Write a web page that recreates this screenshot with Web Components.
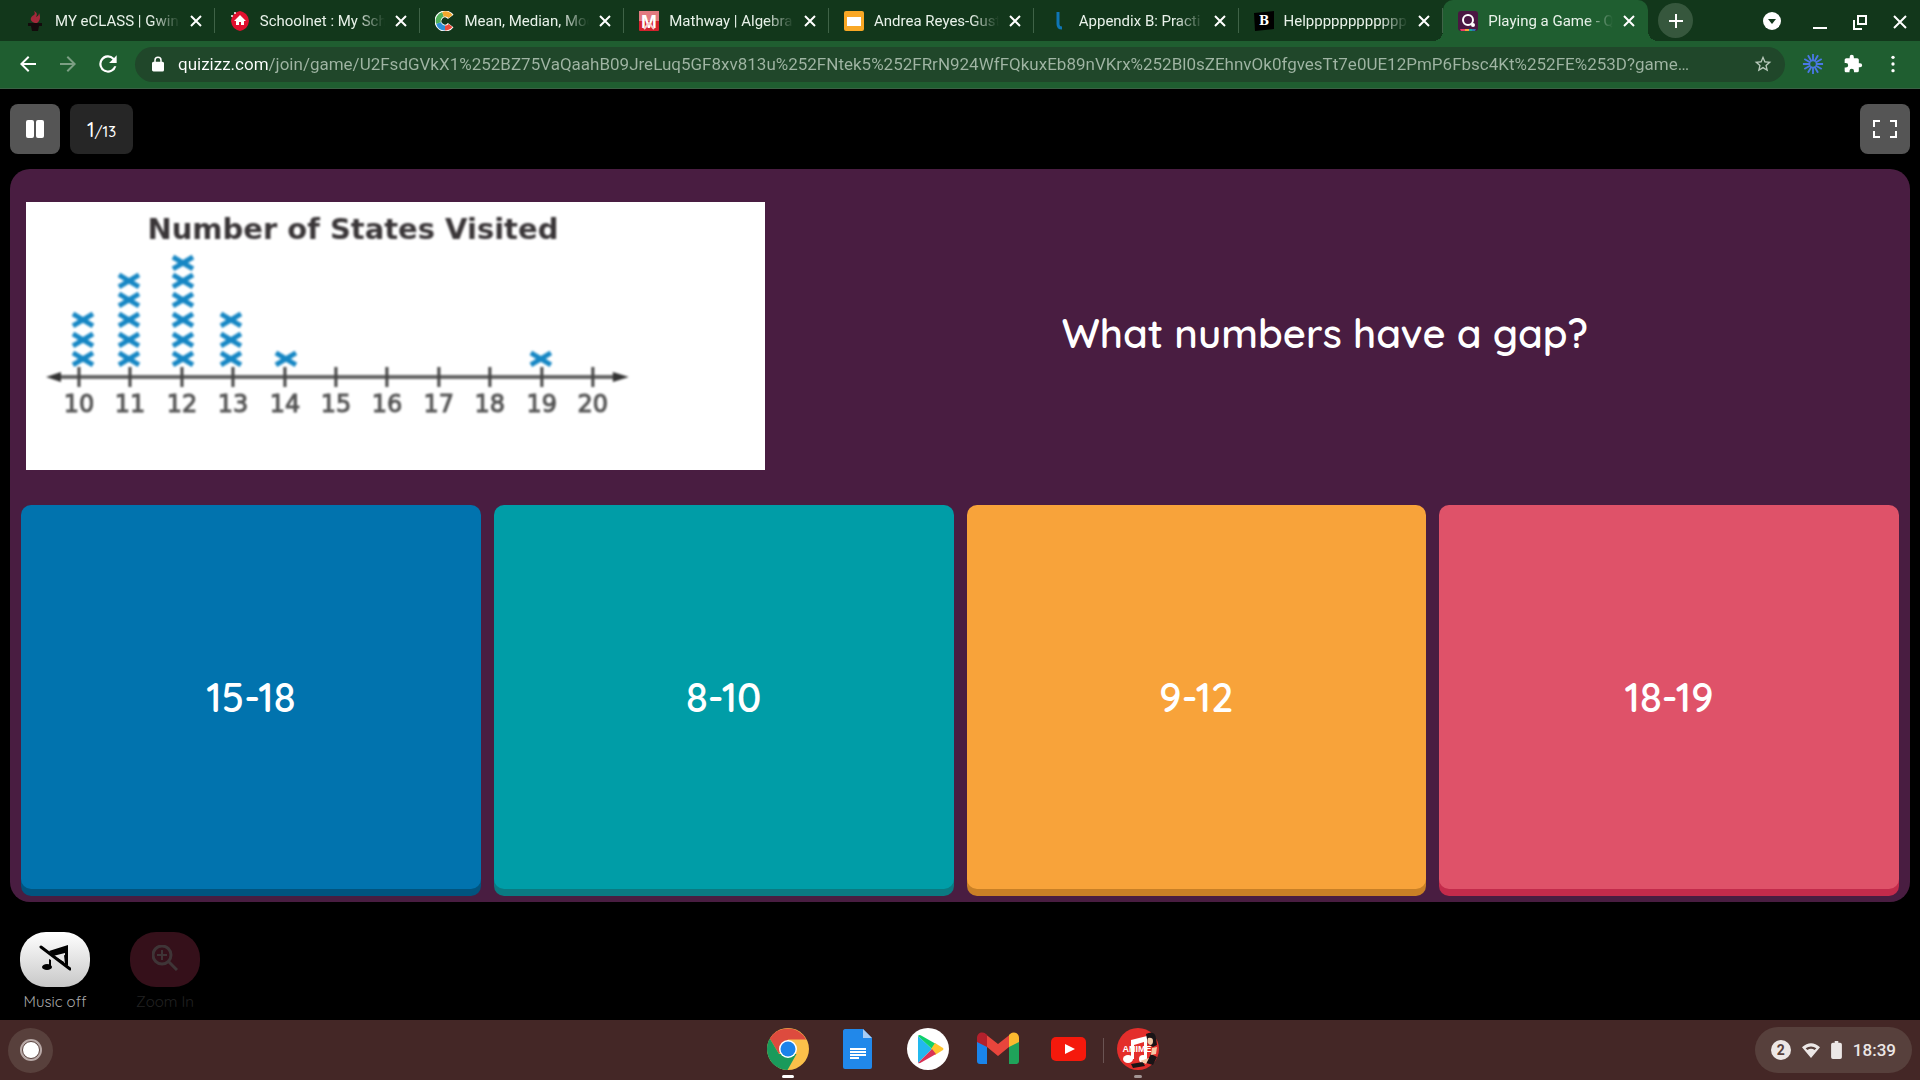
<!DOCTYPE html>
<html lang="en">
<head>
<meta charset="utf-8">
<meta name="viewport" content="width=device-width, initial-scale=1">
<title>Playing a Game - Quizizz</title>
<style>
  html, body {
    height: 100%;
    margin: 0;
    background: #000;
  }

  body {
    display: flex;
    flex-direction: column;
    font-family: Roboto, "Liberation Sans", sans-serif;
    color: #fff;
    --strip: #12371b;
    --toolbar: #1f5e30;
    --field: #20472a;
    --game-font: Quicksand, Lato, sans-serif;
  }
</style>
</head>
<body>
  <tab-strip>
    <browser-tab icon="torch">MY eCLASS | Gwin</browser-tab>
    <browser-tab icon="schoolnet">Schoolnet : My Sch</browser-tab>
    <browser-tab icon="calculator">Mean, Median, Mod</browser-tab>
    <browser-tab icon="mathway">Mathway | Algebra</browser-tab>
    <browser-tab icon="slides">Andrea Reyes-Gust</browser-tab>
    <browser-tab icon="lumen">Appendix B: Practi</browser-tab>
    <browser-tab icon="brainly">Helppppppppppppp</browser-tab>
    <browser-tab icon="quizizz" active>Playing a Game - Q</browser-tab>
  </tab-strip>

  <browser-toolbar></browser-toolbar>

  <quiz-game>
    <quiz-header slot="header" current="1" total="13"></quiz-header>
    <dot-plot slot="media"></dot-plot>
    <span slot="question">What numbers have a gap?</span>
    <answer-option slot="answers" style="--face:#0173ae;--edge:#01547f">15-18</answer-option>
    <answer-option slot="answers" style="--face:#009da7;--edge:#0a7a82">8-10</answer-option>
    <answer-option slot="answers" style="--face:#f8a33a;--edge:#c98026">9-12</answer-option>
    <answer-option slot="answers" style="--face:#df5269;--edge:#c32b4b">18-19</answer-option>
    <game-action slot="actions" icon="music-off">Music off</game-action>
    <game-action slot="actions" icon="zoom-in" disabled>Zoom In</game-action>
  </quiz-game>

  <system-shelf>
    <shelf-app icon="chrome" label="Chrome" state="active"></shelf-app>
    <shelf-app icon="docs" label="Docs"></shelf-app>
    <shelf-app icon="play" label="Play Store"></shelf-app>
    <shelf-app icon="gmail" label="Gmail"></shelf-app>
    <shelf-app icon="youtube" label="YouTube"></shelf-app>
    <shelf-app icon="anime" label="Anime Music" state="running" divided></shelf-app>
    <span slot="clock">18:39</span>
  </system-shelf>

<script>
const ICONS = {
  torch: `<svg viewBox="0 0 20 20"><path fill="#a3283a" d="M10 12C4 10 5 6 9 4c1-1 1-2 0-4 4 2 3 4 2 6 2-1 3-2 3-4 2 4 1 8-2 10z"/><path fill="#130b0c" d="M3 12h14v3h-3l-1 5H7l-1-5H3z"/></svg>`,
  schoolnet: `<svg viewBox="0 0 20 20"><path fill="#e1102f" d="M10 0l3 1 3 2 2 3 1 4-1 4-2 3-3 2-3 1-3-1-3-2-2-3-1-4 1-4 2-3 3-2z"/><path fill="#fff" d="M10 4l6 6h-2v4h-3v-3H9v3H6v-4H4z"/><circle cx="2" cy="5" r="1" fill="#fff"/><circle cx="5" cy="2" r="1" fill="#fff"/></svg>`,
  calculator: `<svg viewBox="0 0 20 20" fill="none" stroke-width="5"><circle cx="10" cy="10" r="7" stroke="#fff" stroke-width="7" stroke-dasharray="35 9" transform="rotate(36 10 10)"/><path stroke="#ef4a3b" d="M15.500 14.500A7 7 0 0 1 10 17"/><path stroke="#2f8fd8" d="M10 17A7 7 0 0 1 3.500 12"/><path stroke="#4fb05a" d="M3.500 12A7 7 0 0 1 8 3.300"/><path stroke="#f3a72d" d="M8 3.300A7 7 0 0 1 15.500 5.500"/></svg>`,
  mathway: `<svg viewBox="0 0 20 20"><rect width="20" height="20" rx="1" fill="#d3222e"/><rect width="20" height="10" fill="#e27a80"/><text x="10" y="17" text-anchor="middle" font-family="Liberation Sans" font-size="19" font-weight="bold" fill="#fff">M</text><path d="M5 18l5-6 5 6" fill="none" stroke="#f6c9cb" stroke-width="2"/></svg>`,
  slides: `<svg viewBox="0 0 20 20"><rect width="20" height="20" rx="2" fill="#f9a825"/><rect x="3" y="6" width="14" height="9" fill="#fff"/></svg>`,
  lumen: `<svg viewBox="0 0 20 20"><path d="M9 1v12q0 4 4 4" fill="none" stroke="#0f75b5" stroke-width="3"/></svg>`,
  brainly: `<svg viewBox="0 0 20 20"><path fill="#000" d="M0 2l20-2v18L1 20z"/><text x="10" y="14" text-anchor="middle" font-family="DejaVu Serif" font-size="12" font-weight="bold" fill="#fff">B</text></svg>`,
  quizizz: `<svg viewBox="0 0 20 20"><rect width="20" height="20" rx="3" fill="#4a1742"/><path d="M2 18h5v2H3z" fill="#ef3c69"/><path d="M7 18h4v2H7z" fill="#f9a33a"/><path d="M11 18h3v2h-3z" fill="#18a99d"/><path d="M14 18h4l-1 2h-3z" fill="#2d70ae"/><circle cx="10" cy="9" r="5" fill="none" stroke="#fff" stroke-width="2"/><circle cx="15" cy="14" r="2" fill="#fff"/></svg>`,
  close: `<svg viewBox="0 0 20 20"><path d="M5 5l10 10M15 5L5 15" stroke="currentColor" stroke-width="2"/></svg>`,
  plus: `<svg viewBox="0 0 20 20"><path d="M10 3v14M3 10h14" stroke="currentColor" stroke-width="2"/></svg>`,
  search: `<svg viewBox="0 0 20 20"><circle cx="10" cy="10" r="9" fill="currentColor"/><path fill="#12371b" d="M6 8h8l-4 5z"/></svg>`,
  minimize: `<svg viewBox="0 0 20 20"><path d="M3 17h14" stroke="currentColor" stroke-width="2"/></svg>`,
  restore: `<svg viewBox="0 0 20 20" fill="none" stroke="currentColor" stroke-width="2"><path d="M8 5h8v8H8z"/><path d="M4 9v9h8"/></svg>`,
  exit: `<svg viewBox="0 0 20 20"><path d="M4 5l12 12M16 5L4 17" stroke="currentColor" stroke-width="2"/></svg>`,
  back: `<svg viewBox="0 0 24 24"><path fill="currentColor" d="M20 11H7.800l5.600-5.600L12 4l-8 8 8 8 1.400-1.400L7.800 13H20z"/></svg>`,
  forward: `<svg viewBox="0 0 24 24"><path fill="currentColor" d="M4 11h12.200l-5.600-5.600L12 4l8 8-8 8-1.400-1.400 5.600-5.600H4z"/></svg>`,
  reload: `<svg viewBox="0 0 24 24"><path fill="currentColor" d="M17.650 6.350A8 8 0 1 0 19.730 14h-2.080A6 6 0 1 1 12 6c1.660 0 3.140.69 4.220 1.780L13 11h7V4z"/></svg>`,
  lock: `<svg viewBox="0 0 24 24"><path fill="currentColor" d="M18 9h-1V7A5 5 0 0 0 7 7v2H6a2 2 0 0 0-2 2v9c0 1 1 2 2 2h12a2 2 0 0 0 2-2v-9a2 2 0 0 0-2-2zM9 7a3 3 0 0 1 6 0v2H9z"/></svg>`,
  star: `<svg viewBox="0 0 24 24"><path fill="currentColor" d="M22 9.240l-7.190-.62L12 2 9.190 8.630 2 9.240l5.460 4.730L5.820 21 12 17.270 18.180 21l-1.630-7.030zM12 15.400l-3.760 2.270 1-4.280-3.320-2.880 4.380-.38L12 6.100l1.710 4.040 4.380.38-3.320 2.880 1 4.280z"/></svg>`,
  burst: `<svg viewBox="0 0 24 24"><g stroke="#4a78e6" stroke-width="2"><path d="M12 1v22M1 12h22M6.500 2.500l11 19M2.500 6.500l19 11M17.500 2.500l-11 19M21.500 6.500l-19 11"/></g><circle cx="12" cy="12" r="3" fill="#1f5e30"/></svg>`,
  puzzle: `<svg viewBox="0 0 24 24"><path fill="currentColor" d="M20.500 11H19V7a2 2 0 0 0-2-2h-4V3.500a2.500 2.500 0 0 0-5 0V5H4a2 2 0 0 0-2 2v3.800h1.500a2.700 2.700 0 0 1 0 5.400H2V20c0 1.100.9 2 2 2h3.800v-1.500a2.700 2.700 0 0 1 5.400 0V22H17a2 2 0 0 0 2-2v-4h1.500a2.500 2.500 0 0 0 0-5z"/></svg>`,
  dots: `<svg viewBox="0 0 24 24" fill="currentColor"><circle cx="12" cy="4" r="2"/><circle cx="12" cy="12" r="2"/><circle cx="12" cy="20" r="2"/></svg>`,
  pause: `<svg viewBox="0 0 20 20" fill="#fff"><rect x="1" y="1" width="8" height="18" rx="2"/><rect x="11" y="1" width="8" height="18" rx="2"/></svg>`,
  fullscreen: `<svg viewBox="0 0 26 20"><path fill="none" stroke="#fff" stroke-width="2" d="M8 2H2v6M18 2h6v6M2 12v6h6M24 12v6h-6"/></svg>`,
  "music-off": `<svg viewBox="0 0 32 26"><path fill="#000" d="M10 6L29 0v21l-3-2V8l-12 3z"/><ellipse cx="8" cy="22" rx="5" ry="3"/><path d="M10 14l2 1v7h-2zM17 13l9-3-1 9z"/><path fill="#e6e6e6" d="M17 12l8-3v8z"/><path d="M2 2l29 22" stroke="#000" stroke-width="3" stroke-linecap="round"/></svg>`,
  "zoom-in": `<svg viewBox="0 0 26 26" fill="none" stroke="#3f3537"><circle cx="10" cy="10" r="9" stroke-width="3"/><path d="M10 5v10M5 10h10" stroke-width="2"/><path d="M16 16l9 9" stroke-width="3"/></svg>`,
  chrome: `<svg viewBox="0 0 42 42"><circle cx="21" cy="21" r="21" fill="#fbc04a"/><path fill="#dd4b3e" d="M2.800 10.500A21 21 0 0 1 39.200 11.500H21L12 26z"/><path fill="#1a9a5b" d="M2.800 10.500A21 21 0 0 0 20.500 42l9-16H12z"/><circle cx="21" cy="21" r="9" fill="#fff"/><circle cx="21" cy="21" r="7.500" fill="#1a82ea"/></svg>`,
  docs: `<svg viewBox="0 0 42 42"><path fill="#2188ea" d="M8 1h18l9 9v29a2 2 0 0 1-2 2H8a2 2 0 0 1-2-2V3c0-1 1-2 2-2z"/><path fill="#a8cdf5" d="M26 1l9 9h-9z"/><path stroke="#fff" stroke-width="2" d="M13 21h16M13 24h16M13 27h16M13 30h9"/></svg>`,
  play: `<svg viewBox="0 0 42 42"><circle cx="21" cy="21" r="21" fill="#fff"/><path fill="#22b8ee" d="M11 8v27l14-14z"/><path fill="#0fd06b" d="M11 8q1-2 4 0l14 8-4 5z"/><path fill="#ffc42e" d="M28 15l8 5q1 1 0 2l-8 5-4-6z"/><path fill="#d93255" d="M11 35l14-14 4 5-14 8q-3 2-4 1z"/></svg>`,
  gmail: `<svg viewBox="0 0 42 42"><path fill="#1a84ea" d="M0 12h10v24H3a3 3 0 0 1-3-3z"/><path fill="#1fa35a" d="M32 12h10v21a3 3 0 0 1-3 3h-7z"/><path fill="#e8453c" d="M7 5l14 11L35 5l-3 14-11 9-11-9z"/><path fill="#b3202c" d="M0 14v-4C0 5 5 3 9 6l1 1v12l-10-5z"/><path fill="#fbb92f" d="M42 14v-4c0-5-5-7-9-4l-1 1v12l10-5z"/></svg>`,
  youtube: `<svg viewBox="0 0 42 42"><rect x="4" y="9" width="35" height="24" rx="5" fill="#f5190c"/><path fill="#fff" d="M18 16l10 5-10 5z"/></svg>`,
  anime: `<svg viewBox="0 0 42 42"><circle cx="21" cy="21" r="21" fill="#e42e2b"/><path fill="#fff" d="M14 12l16-4v22h-3V14l-10 3v14h-3z"/><ellipse cx="11" cy="31" rx="5" ry="4" fill="#fff"/><ellipse cx="26" cy="31" rx="4" ry="4" fill="#fff"/><path fill="#191416" d="M29 6q9-4 10 4l1 7-4 2-5-3zM34 26l6 3-4 8-7-2zM14 36l12-2 2 4-12 2z"/><path fill="#f5c9a6" d="M31 10q5-1 5 3t-3 4q-4-2-2-7zM35 20l5-1-1 7-5 1zM23 33l9-3-3 6z"/><text x="20" y="24" text-anchor="middle" font-family="Liberation Sans" font-size="9" font-weight="bold" fill="#fff">ANIME</text></svg>`,
  wifi: `<svg viewBox="0 0 20 20"><path fill="currentColor" fill-rule="evenodd" d="M0 7q10-9 20 0L10 19zM4 8l2 2q4-3 8 0l2-2q-6-4-12 0z"/></svg>`,
  battery: `<svg viewBox="0 0 12 20"><path fill="currentColor" d="M4 0h4v2h2a2 2 0 0 1 2 2v14a2 2 0 0 1-2 2H2a2 2 0 0 1-2-2V4a2 2 0 0 1 2-2h2z"/></svg>`
};

function icon(name, width = 20, height = width) {
  return ICONS[name].replace("<svg", `<svg width="${width}" height="${height}" aria-hidden="true"`);
}

// shared reset for every shadow root
const BASE = `
  :host, * { box-sizing: border-box; }
  svg { display: block; flex: none; }
  button {
    display: flex;
    align-items: center;
    justify-content: center;
    margin: 0;
    padding: 0;
    border: 0;
    background: none;
    color: inherit;
    font: inherit;
    cursor: pointer;
  }
`;

class BaseElement extends HTMLElement {
  constructor() {
    super();
    this.attachShadow({ mode: "open" });
  }

  connectedCallback() {
    this.shadowRoot.innerHTML = `<style>${BASE}${this.styles()}</style>${this.render()}`;
  }
}

class TabStrip extends BaseElement {
  styles() {
    return `
      :host {
        display: flex;
        align-items: stretch;
        height: 41px;
        flex: none;
        padding-left: 10px;
        background: var(--strip);
      }
      nav { display: flex; flex: 1; min-width: 0; }
      .right { display: flex; align-items: center; width: 272px; }
      .new {
        width: 35px;
        height: 35px;
        margin: 0 auto 0 10px;
        border-radius: 50%;
        background: #36573d;
      }
      .window { width: 40px; height: 40px; }
      .search { margin-right: 8px; }
    `;
  }

  render() {
    return `
      <nav aria-label="Tabs"><slot></slot></nav>
      <div class="right">
        <button class="new" aria-label="New tab">${icon("plus")}</button>
        <button class="window search" aria-label="Search tabs">${icon("search")}</button>
        <button class="window" aria-label="Minimize">${icon("minimize")}</button>
        <button class="window" aria-label="Restore">${icon("restore")}</button>
        <button class="window" aria-label="Close window">${icon("exit")}</button>
      </div>
    `;
  }
}

class BrowserTab extends BaseElement {
  styles() {
    return `
      :host {
        display: flex;
        position: relative;
        align-items: center;
        flex: 1;
        min-width: 0;
        padding: 0 6px 0 15px;
        font-size: 15px;
        color: #e9f2ea;
      }
      :host::after {
        content: "";
        position: absolute;
        right: 0;
        top: 8px;
        width: 1px;
        height: 25px;
        background: #3f6347;
      }
      :host([active]) {
        background: var(--toolbar);
        border-radius: 10px 10px 0 0;
      }
      :host([active])::before, :host([active])::after {
        content: "";
        position: absolute;
        top: auto;
        bottom: 0;
        width: 10px;
        height: 10px;
      }
      :host([active])::before {
        right: 100%;
        background: radial-gradient(circle at 0 0, transparent 10px, var(--toolbar) 10px);
      }
      :host([active])::after {
        left: 100%;
        background: radial-gradient(circle at 100% 0, transparent 10px, var(--toolbar) 10px);
      }
      a {
        display: flex;
        align-items: center;
        flex: 1;
        min-width: 0;
        gap: 10px;
        color: inherit;
        text-decoration: none;
      }
      .title {
        flex: 1;
        overflow: hidden;
        white-space: nowrap;
        -webkit-mask-image: linear-gradient(to left, transparent, #000 28px);
        mask-image: linear-gradient(to left, transparent, #000 28px);
      }
      button { width: 26px; height: 26px; margin-left: 3px; color: #fff; }
    `;
  }

  render() {
    return `
      <a href="#">${icon(this.getAttribute("icon"))}<span class="title"><slot></slot></span></a>
      <button aria-label="Close tab">${icon("close")}</button>
    `;
  }
}

class BrowserToolbar extends BaseElement {
  styles() {
    return `
      :host {
        display: flex;
        align-items: center;
        height: 48px;
        flex: none;
        padding: 0 7px 1px 8px;
        background: var(--toolbar);
        border-bottom: 1px solid #3a6044;
      }
      button { width: 40px; height: 40px; }
      .dim { color: #7c9f84; }
      .field {
        display: flex;
        align-items: center;
        flex: 1;
        min-width: 0;
        height: 35px;
        margin: 0 8px 0 7px;
        padding: 0 2px 0 14px;
        border-radius: 18px;
        background: var(--field);
      }
      .star { color: #b8c9bb; }
      input {
        flex: 1;
        min-width: 0;
        height: 30px;
        margin-left: 11px;
        padding: 0;
        border: 0;
        outline: 0;
        font: 17px Roboto, sans-serif;
        text-overflow: ellipsis;
        color: transparent;
        /* the host name is brighter than the path */
        background: linear-gradient(to right, #fff 90px, #a0b5a4 90px);
        -webkit-background-clip: text;
        background-clip: text;
      }
    `;
  }

  render() {
    return `
      <button aria-label="Back">${icon("back", 24)}</button>
      <button class="dim" aria-label="Forward">${icon("forward", 24)}</button>
      <button aria-label="Reload">${icon("reload", 26)}</button>
      <div class="field">
        ${icon("lock", 18)}
        <input type="text" aria-label="Address" spellcheck="false" value="quizizz.com/join/game/U2FsdGVkX1%252BZ75VaQaahB09JreLuq5GF8xv813u%252FNtek5%252FRrN924WfFQkuxEb89nVKrx%252Bl0sZEhnvOk0fgvesTt7e0UE12PmP6Fbsc4Kt%252FE%253D?game…">
        <button class="star" aria-label="Bookmark">${icon("star")}</button>
      </div>
      <button aria-label="Extension">${icon("burst", 22)}</button>
      <button aria-label="Extensions">${icon("puzzle")}</button>
      <button aria-label="Menu">${icon("dots")}</button>
    `;
  }
}

class QuizHeader extends BaseElement {
  styles() {
    return `
      :host {
        display: flex;
        align-items: center;
        gap: 10px;
        height: 80px;
        font-family: var(--game-font);
      }
      button {
        width: 50px;
        height: 50px;
        border-radius: 8px;
        background: #555;
      }
      .count {
        display: flex;
        align-items: baseline;
        justify-content: center;
        width: 63px;
        height: 50px;
        border-radius: 8px;
        background: #262626;
        font-size: 15px;
        line-height: 52px;
        font-weight: 500;
      }
      .count b { font-size: 20px; font-weight: 500; }
      .full { margin-left: auto; }
    `;
  }

  render() {
    return `
      <button aria-label="Pause">${icon("pause", 20)}</button>
      <div class="count"><b>${this.getAttribute("current")}</b>/${this.getAttribute("total")}</div>
      <button class="full" aria-label="Fullscreen">${icon("fullscreen", 26, 20)}</button>
    `;
  }
}

class QuizGame extends BaseElement {
  styles() {
    return `
      :host {
        display: flex;
        flex-direction: column;
        flex: 1;
        min-height: 0;
        padding: 0 10px;
        background: #000;
        font-family: var(--game-font);
      }
      main {
        display: grid;
        grid-template-rows: 336fr 397fr;
        flex: 1;
        min-height: 0;
        border-radius: 20px;
        background: #491d41;
      }
      .top {
        display: grid;
        grid-template-columns: 2fr 3fr;
        align-items: center;
        gap: 6px;
        padding: 0 31px 2px 16px;
      }
      h1 {
        margin: 0;
        padding-bottom: 6px;
        font-size: 40px;
        line-height: 52px;
        font-weight: 600;
        text-align: center;
      }
      .answers {
        display: grid;
        grid-template-columns: repeat(4, 1fr);
        gap: 13px;
        padding: 0 11px 13px;
      }
      footer {
        display: flex;
        gap: 40px;
        height: 118px;
        padding: 30px 10px 0;
      }
    `;
  }

  render() {
    return `
      <slot name="header"></slot>
      <main>
        <div class="top">
          <slot name="media"></slot>
          <h1><slot name="question"></slot></h1>
        </div>
        <div class="answers"><slot name="answers"></slot></div>
      </main>
      <footer><slot name="actions"></slot></footer>
    `;
  }
}

class DotPlot extends BaseElement {
  styles() {
    return `
      :host { display: block; background: #fff; }
      svg { width: 100%; height: auto; filter: blur(1px); }
    `;
  }

  render() {
    const columns = [[57, 3], [103, 5], [157, 6], [205, 3], [260, 1], [515, 1]];
    const rows = [157, 138, 118, 98, 79, 61];
    let crosses = "";
    columns.forEach(([x, count]) => {
      rows.slice(0, count).forEach((y) => {
        crosses += `M${x - 10} ${y - 6}l20 12m0 -12l-20 12`;
      });
    });

    let ticks = "";
    let labels = "";
    for (let i = 0; i <= 10; i++) {
      const x = Math.round(53 + i * 51.4);
      ticks += `M${x} 165v20`;
      labels += `<text x="${x}" y="210">${10 + i}</text>`;
    }

    return `
      <svg viewBox="0 0 739 269" role="img" aria-label="Number of States Visited">
        <text x="327" y="37" text-anchor="middle" font-family="DejaVu Sans" font-size="29" font-weight="bold" fill="#3a3638">Number of States Visited</text>
        <path d="${crosses}" stroke="#1787c4" stroke-width="5"/>
        <path d="M26 175h570" stroke="#666" stroke-width="4"/>
        <path d="${ticks}" stroke="#444" stroke-width="3"/>
        <path d="M20 175l15-5v10zM603 175l-16-5v10z" fill="#333"/>
        <g font-family="DejaVu Sans" font-size="24" text-anchor="middle" fill="#555" stroke="#555">${labels}</g>
      </svg>
    `;
  }
}

class AnswerOption extends BaseElement {
  styles() {
    return `
      :host { display: flex; }
      button {
        flex: 1;
        border-radius: 10px;
        background: var(--face);
        box-shadow: 0 7px 0 var(--edge);
        color: #fff;
        font-size: 40px;
        font-weight: 600;
      }
    `;
  }

  render() {
    return `<button><slot></slot></button>`;
  }
}

class GameAction extends BaseElement {
  styles() {
    return `
      :host {
        display: flex;
        flex-direction: column;
        width: 70px;
        color: #aaa;
        font-size: 15px;
        font-weight: 400;
      }
      :host([disabled]) { color: #222; }
      button {
        height: 55px;
        margin-bottom: 5px;
        padding-bottom: 4px;
        border-radius: 26px;
        background: linear-gradient(#fff, #c8c8c8);
      }
      button:disabled { background: #35101a; }
      label { line-height: 20px; text-align: center; white-space: nowrap; }
    `;
  }

  render() {
    const size = this.hasAttribute("disabled") ? [26, 26] : [32, 26];
    return `
      <button id="action" ${this.hasAttribute("disabled") ? "disabled" : ""}>${icon(this.getAttribute("icon"), ...size)}</button>
      <label for="action"><slot></slot></label>
    `;
  }
}

class SystemShelf extends BaseElement {
  styles() {
    return `
      :host {
        display: grid;
        grid-template-columns: 1fr auto 1fr;
        align-items: center;
        height: 60px;
        flex: none;
        padding: 0 8px;
        background: #442726;
      }
      .launcher {
        width: 45px;
        height: 45px;
        border-radius: 50%;
        background: #58403c;
      }
      .launcher::before {
        content: "";
        width: 16px;
        height: 16px;
        border: 1px solid #58403c;
        border-radius: 50%;
        background: #fff;
        box-shadow: 0 0 0 2px #b8a9a7;
      }
      .apps { display: flex; padding-left: 6px; }
      .tray {
        justify-self: end;
        gap: 11px;
        height: 46px;
        padding: 0 16px;
        border-radius: 23px;
        background: #57403c;
        color: #ece7e6;
        font-size: 17px;
        font-weight: 500;
      }
      .badge {
        width: 20px;
        height: 20px;
        border-radius: 50%;
        background: #ece7e6;
        color: #57403c;
        font-size: 14px;
        line-height: 20px;
        font-weight: 700;
      }
    `;
  }

  render() {
    return `
      <button class="launcher" aria-label="Launcher"></button>
      <div class="apps"><slot></slot></div>
      <button class="tray">
        <span class="badge">2</span>
        ${icon("wifi", 18)}
        ${icon("battery", 11, 18)}
        <slot name="clock"></slot>
      </button>
    `;
  }
}

class ShelfApp extends BaseElement {
  styles() {
    return `
      :host {
        display: flex;
        position: relative;
        align-items: center;
        justify-content: center;
        width: 70px;
        height: 60px;
        padding-bottom: 2px;
      }
      :host([divided])::before {
        content: "";
        position: absolute;
        left: 0;
        top: 18px;
        width: 1px;
        height: 25px;
        background: #6b5453;
      }
      :host([state])::after {
        content: "";
        position: absolute;
        left: 50%;
        bottom: 2px;
        width: 12px;
        height: 3px;
        margin-left: -6px;
        border-radius: 2px;
        background: #fff;
      }
      :host([state="running"])::after { width: 8px; margin-left: -4px; background: #a39594; }
    `;
  }

  render() {
    return `<button aria-label="${this.getAttribute("label")}">${icon(this.getAttribute("icon"), 42)}</button>`;
  }
}

customElements.define("tab-strip", TabStrip);
customElements.define("browser-tab", BrowserTab);
customElements.define("browser-toolbar", BrowserToolbar);
customElements.define("quiz-game", QuizGame);
customElements.define("quiz-header", QuizHeader);
customElements.define("dot-plot", DotPlot);
customElements.define("answer-option", AnswerOption);
customElements.define("game-action", GameAction);
customElements.define("system-shelf", SystemShelf);
customElements.define("shelf-app", ShelfApp);
</script>
</body>
</html>
